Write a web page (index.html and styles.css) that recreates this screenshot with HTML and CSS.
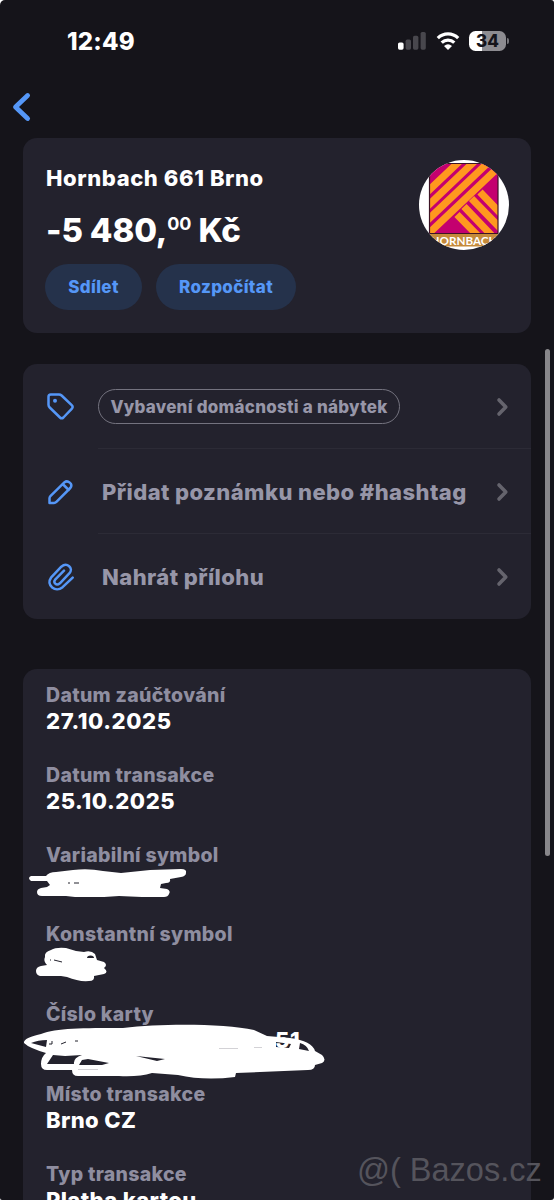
FILE: index.html
```html
<!DOCTYPE html>
<html lang="cs">
<head>
<meta charset="utf-8">
<title>Detail transakce</title>
<link rel="stylesheet" href="styles.css">
</head>
<body>
<div class="phone">
  <header class="status">
    <span class="time">12:49</span>
    <div class="indicators">
      <svg class="signal" width="28" height="18" viewBox="0 0 28 18">
        <rect x="0" y="10.5" width="5.6" height="7.2" rx="1.6" fill="#fff"/>
        <g fill="#48474d"><rect x="7.6" y="7.6" width="5.4" height="10.1" rx="1.6"/><rect x="15" y="3.8" width="5.4" height="13.9" rx="1.6"/><rect x="22.6" y="0" width="5.2" height="17.7" rx="1.6"/></g>
      </svg>
      <svg class="wifi" width="24" height="18" viewBox="0 0 24 18">
        <path d="M1.800 6.100C7.700.5 16.300.5 22.200 6.100M5.700 10.600C9.300 7.200 14.700 7.200 18.300 10.600" fill="none" stroke="#fff" stroke-width="3.300"/>
        <path d="M12 18 8 13.900Q12 10.800 16 13.900Z" fill="#fff"/>
      </svg>
      <div class="battery"><span>34</span></div>
      <i class="nub"></i>
    </div>
  </header>

  <nav class="nav">
    <svg width="20" height="30" viewBox="0 0 20 30"><path d="M16.600 3.500 4.500 15l12.100 11.500" fill="none" stroke="#5597f7" stroke-width="4.800" stroke-linecap="round" stroke-linejoin="round"/></svg>
  </nav>

  <section class="card summary">
    <div class="info">
      <h1 class="merchant">Hornbach 661 Brno</h1>
      <p class="amount">-5 480,<span class="cents">00</span> Kč</p>
      <div class="buttons"><button class="pill share">Sdílet</button><button class="pill split">Rozpočítat</button></div>
    </div>
    <svg class="logo" width="90" height="90" viewBox="0 0 90 90">
      <defs>
        <clipPath id="disc"><circle cx="45" cy="45" r="45"/></clipPath>
        <clipPath id="mark"><path d="M11 4h68v69H11z"/></clipPath>
      </defs>
      <g clip-path="url(#disc)">
        <path d="M0 0h90v90H0z" fill="#fff"/>
        <path d="M11 4h68v69H11z" fill="#c4006f"/>
        <g clip-path="url(#mark)" fill="none" stroke="#ff981f" stroke-width="7.200">
          <path d="M7 33 45-3M7 47.500 59-2M7 61.500 74-2M7 76 83 4"/>
          <path d="M61 32 85 57M52.500 38.500 86 73M45 46.500 76 79M38 54.500 60 77"/>
        </g>
        <path d="M10.500 3.500h68.500v70h-68.500z" fill="none" stroke="#3d1425" stroke-width="1.200"/>
        <path d="M11 74h68v12.500H11z" fill="#c58a3b"/>
        <text class="logo-text" x="11.500" y="84.500" textLength="67" lengthAdjust="spacingAndGlyphs">HORNBACH</text>
      </g>
    </svg>
  </section>

  <section class="card actions">
    <div class="action">
      <svg class="icon" width="30" height="30" viewBox="0 0 30 30"><path d="M5.800 2.500H14Q15.500 2.500 16.600 3.500L26.700 13.200Q28.500 15 26.700 16.800L18.400 25.500Q16.700 27.200 15 25.500L4.700 15.500Q3.500 14.300 3.500 12.800V4.800Q3.500 2.500 5.800 2.500Z"/><circle class="dot" cx="10" cy="8.800" r="2"/></svg>
      <div class="label"><span class="tag">Vybavení domácnosti a nábytek</span></div>
      <svg class="chevron" width="13" height="20" viewBox="0 0 13 20"><path d="M3 3l6.800 7L3 17"/></svg>
    </div>
    <div class="action">
      <svg class="icon" width="30" height="30" viewBox="0 0 30 30"><path d="M4.500 26V21.200Q4.500 20 5.400 19.100L19.600 5.200Q22 3.300 24.800 5.600T25.300 11L11.400 24.900Q10.300 26 9 26ZM17.700 7l6 6"/></svg>
      <div class="label"><span class="note">Přidat poznámku nebo #hashtag</span></div>
      <svg class="chevron" width="13" height="20" viewBox="0 0 13 20"><path d="M3 3l6.800 7L3 17"/></svg>
    </div>
    <div class="action">
      <svg class="icon" width="30" height="30" viewBox="0 0 30 30"><path d="M27.700 15.600 17.600 25.200C10.500 31 .8 23.500 6 15.700L16.300 4.700C22-.2 28.800 6.200 24.500 11.200L14.900 21.300C11.200 24.300 7.700 20.700 10.400 17.400L19 8.700"/></svg>
      <div class="label"><span class="upload">Nahrát přílohu</span></div>
      <svg class="chevron" width="13" height="20" viewBox="0 0 13 20"><path d="M3 3l6.800 7L3 17"/></svg>
    </div>
  </section>

  <section class="card details">
    <dl>
      <div><dt>Datum zaúčtování</dt><dd>27.10.2025</dd></div>
      <div><dt>Datum transakce</dt><dd>25.10.2025</dd></div>
      <div><dt>Variabilní symbol</dt><dd></dd></div>
      <div><dt>Konstantní symbol</dt><dd></dd></div>
      <div><dt>Číslo karty</dt><dd class="card-no">51</dd></div>
      <div><dt>Místo transakce</dt><dd>Brno CZ</dd></div>
      <div><dt>Typ transakce</dt><dd>Platba kartou</dd></div>
    </dl>
    <svg class="redaction" viewBox="23 669 508 531">
      <g fill="#fff">
        <path d="M31 876H46Q49 872 56 872L73 870Q88 868 103 871L121 873 150 870 181 869Q187 869 186 873 186 876 181 877L170 879Q171 883 166 883L161 884 160 888 167 889Q171 891 169 894 168 897 164 897H142L119 896 104 897H75L66 896H42Q37 896 37 892 37 889 41 888L47 887 50 885 47 881H31Q27 878 31 876Z"/>
        <path d="M45 957Q44 952 51 950 56 947 66 948L76 951 84 952Q91 950 95 954L97 960 104 962Q108 965 104 968 109 972 104 974L94 976Q95 981 89 981 79 982 67 977L61 976H40Q36 975 36 971 36 967 41 966L47 965Q43 961 45 957Z"/>
        <path fill-rule="evenodd" d="M24 1043Q23 1038 41 1034C56 1028 83 1028 123 1028 165 1023 226 1024 254 1030L267 1036 290 1038Q312 1041 315 1051L322 1055Q327 1060 322 1063L315 1065Q315 1070 308 1070L236 1073 235 1077Q204 1081 178 1075L152 1073Q139 1077 119 1076H78Q72 1076 72 1070H47Q41 1070 41 1064 41 1057 46 1053 29 1048 24 1043ZM31 1043 46 1047 47 1040Q38 1040 31 1043ZM53 1055 47 1064H74Q73 1058 82 1055L65 1056ZM82 1060 79 1065H102L109 1063 88 1059ZM136 1056 157 1061 165 1059ZM276 1042V1047L289 1048 291 1044ZM300 1043 299 1049 309 1051Q307 1045 300 1043Z"/>
      </g>
      <path d="M49 1044h3v-3M61 1044l5-2M75 1041h3M68 883h2M74 883h5M50 960h1M54 960l8 2" fill="none" stroke="#23222d"/>
      <path d="M219 1048.500h19M254 1047.500h8M78 1069.500h20" fill="none" stroke="#b5b4ba" stroke-width=".6"/>
      <path d="M87 958q0-2.500 3.500-2.500t3.500 2.500Z" fill="#23222d"/>
    </svg>
  </section>
  <div class="scrollbar"></div>
  <div class="watermark">@( Bazos.cz</div>
</div>
</body>
</html>
```

FILE: styles.css
```css
* { box-sizing: border-box; }
html { background: #fff; }
body { margin: 0; font-family: Inter, "Liberation Sans", sans-serif; font-weight: 800; color: #fff; }
h1, p, dl, dd { margin: 0; }
.phone { position: relative; width: 554px; height: 1200px; overflow: hidden; background: #15141a; border-radius: 5px 3px 3px 2px; display: flex; flex-direction: column; }
.status { height: 82px; flex: none; display: flex; justify-content: space-between; align-items: center; padding: 0 45px 0 67px; }
.time { padding-top: 2px; font-size: 24px; line-height: 30px; letter-spacing: 0.2px; }
.indicators { display: flex; align-items: center; }
.wifi { margin-left: 10px; }
.battery { width: 37px; height: 20px; margin-left: 9px; border-radius: 6.5px; background: linear-gradient(to right, #fff 13px, #8d8c91 13px); color: #15141a; font-size: 17px; line-height: 20px; font-weight: 800; text-align: center; }
.nub { width: 2px; height: 6px; margin-left: 1px; border-radius: 0 2px 2px 0; background: #77767b; }
.nav { height: 56px; flex: none; padding: 10px 0 0 11px; }
.nav svg { display: block; }
.card { width: 508px; flex: none; margin-left: 23px; background: #23222d; border-radius: 14px; }
.summary { height: 195px; display: flex; justify-content: space-between; padding: 22px 22px 0 22px; }
.info { display: flex; flex-direction: column; }
.merchant { padding: 4px 0 0 1px; font-weight: 800; font-size: 22px; line-height: 28px; letter-spacing: 0.6px; }
.amount { margin-top: 18px; padding-left: 1px; font-size: 33px; line-height: 40px; height: 40px; letter-spacing: -0.15px; white-space: nowrap; }
.cents { font-size: 18px; font-weight: 700; line-height: 1; position: relative; top: -12px; }
.buttons { display: flex; gap: 14px; margin-top: 14px; }
.pill { height: 46px; border: 0; padding: 0; border-radius: 23px; background: #25324b; color: #5597f7; font: 800 17px/46px Inter, sans-serif; letter-spacing: 0.35px; }
.share { width: 97px; }
.split { width: 140px; }
.logo { flex: none; }
.logo-text { font: 700 11.5px Lato, sans-serif; fill: #fff; }
.actions { height: 255px; margin-top: 31px; }
.action { height: 85px; display: flex; align-items: center; padding-left: 22px; position: relative; }
.icon { flex: none; fill: none; stroke: #5597f7; stroke-width: 2.5; stroke-linecap: round; stroke-linejoin: round; }
.icon .dot { fill: #5597f7; stroke: none; }
.label { flex: 1; height: 85px; margin-left: 23px; display: flex; align-items: center; border-bottom: 1px solid #2c2b36; color: #9796a8; font-size: 22px; letter-spacing: 0.43px; }
.action:last-child .label { border: 0; }
.label span { white-space: nowrap; }
.note, .upload { margin-left: 4px; padding-top: 1px; }
.label .tag { width: 302px; height: 35px; border: 1px solid #74737f; border-radius: 18px; font-size: 17px; line-height: 34px; letter-spacing: 0.25px; text-align: center; }
.chevron { position: absolute; right: 22px; fill: none; stroke: #65646d; stroke-width: 3.6; stroke-linecap: round; stroke-linejoin: round; }
.details { position: relative; height: 545px; margin-top: 50px; padding: 14px 23px; }
dl > div { height: 79.8px; }
dt { color: #8f8ea0; font-size: 19.5px; line-height: 24px; letter-spacing: 0.3px; }
dd { height: 26px; font-size: 22px; line-height: 28px; letter-spacing: 0.6px; white-space: nowrap; }
dl > div:nth-child(n+6) dd { letter-spacing: 0.4px; }
.card-no { padding-left: 229px; }
.redaction { position: absolute; left: 0; top: 0; width: 508px; height: 531px; overflow: visible; }
.scrollbar { position: absolute; left: 545px; top: 349px; width: 5px; height: 507px; border-radius: 3px; background: #88878b; }
.watermark { position: absolute; left: 357px; top: 1150px; font: 400 32.5px/40px "Liberation Sans", Arial, sans-serif; color: #55545c; white-space: nowrap; }
```
